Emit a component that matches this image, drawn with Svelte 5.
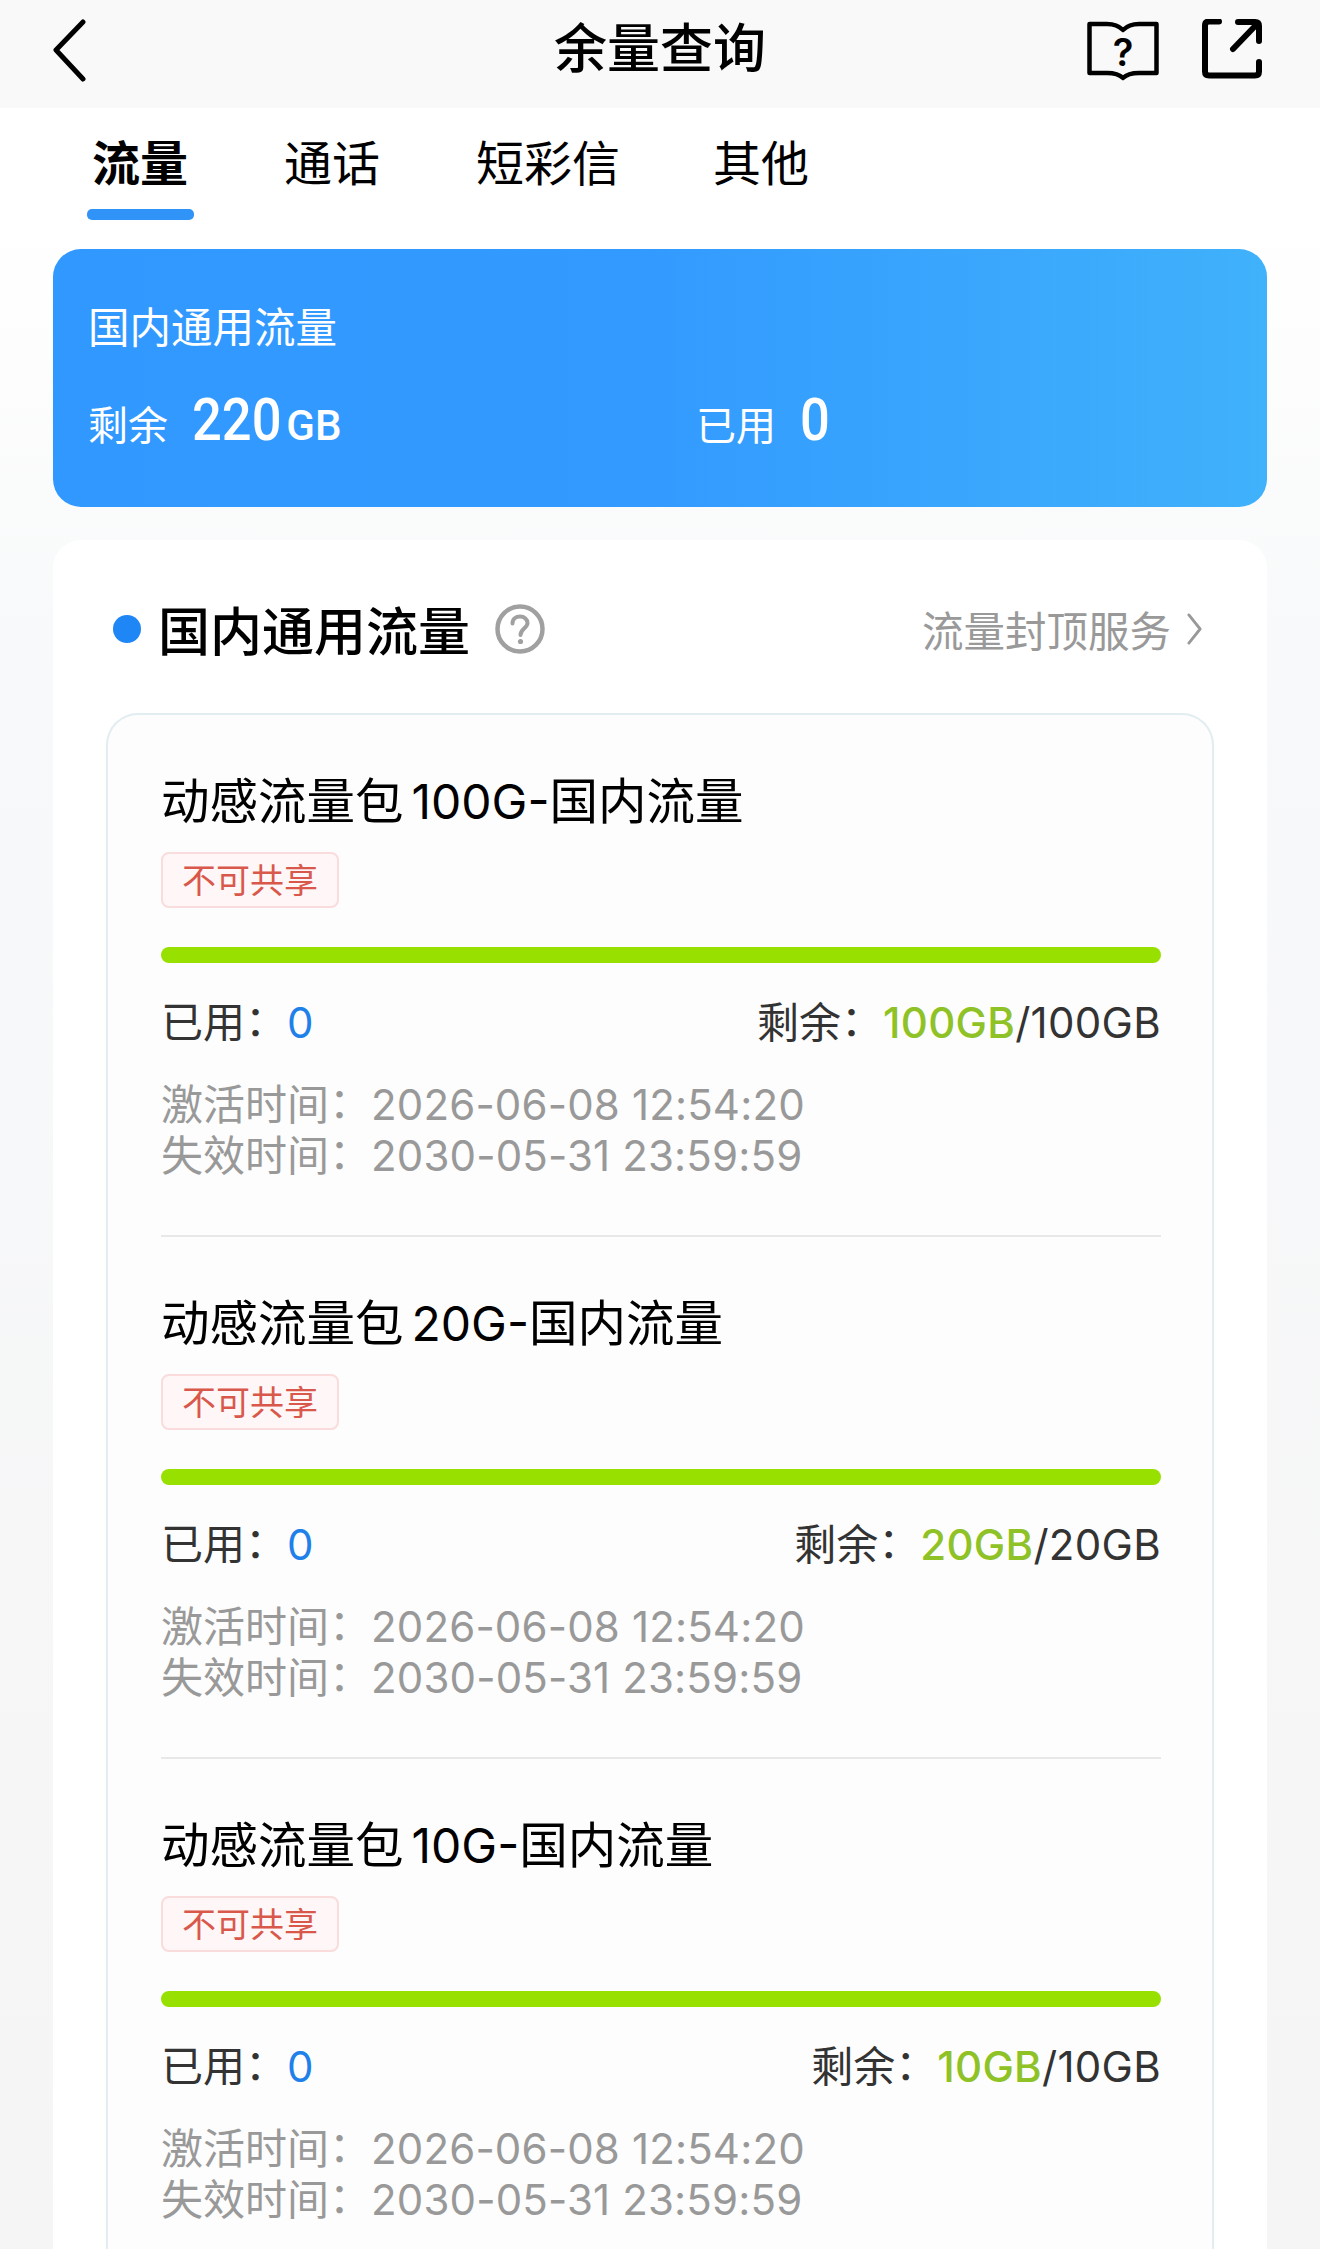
<script>
  const items = [
    { name: '动感流量包', size: '100G', left: '100GB', total: '100GB' },
    { name: '动感流量包', size: '20G', left: '20GB', total: '20GB' },
    { name: '动感流量包', size: '10G', left: '10GB', total: '10GB' }
  ];
</script>

<div class="page">
  <header class="nav">
    <svg class="back" width="40" height="64" viewBox="0 0 40 64" fill="none"><path d="M33 4 L6 32 L33 61" stroke="#000" stroke-width="5" stroke-linecap="round" stroke-linejoin="round"/></svg>
    <h1>余量查询</h1>
    <svg class="book" width="76" height="62" viewBox="0 0 76 62" fill="none"><path d="M4.5 5 H22 C29 5 34 7 38 11 C42 7 47 5 54 5 H71.5 V54 H54 C47 54 42 55 38 59 C34 55 29 54 22 54 H4.5 Z" stroke="#000" stroke-width="4.5" stroke-linejoin="round"/><text x="38" y="47" text-anchor="middle" class="q">?</text></svg>
    <svg class="share" width="64" height="62" viewBox="0 0 64 62" fill="none"><path d="M21 2.5 H11 Q7 2.5 7 6.5 V52.5 Q7 56.5 11 56.5 H57 Q61 56.5 61 52.5 V43" stroke="#000" stroke-width="6" stroke-linecap="round"/><path d="M40 3 H57 Q61 3 61 7 V22 M60 4 L35 30" stroke="#000" stroke-width="6" stroke-linecap="round"/></svg>
  </header>

  <nav class="tabs">
    <span class="tab active">流量</span>
    <span class="tab">通话</span>
    <span class="tab">短彩信</span>
    <span class="tab last">其他</span>
  </nav>

  <section class="hero">
    <div class="hero-title">国内通用流量</div>
    <div class="hero-row">
      <div class="hero-cell left"><span class="hl">剩余</span><b class="num">220</b><span class="unit">GB</span></div>
      <div class="hero-cell"><span class="hl">已用</span><b class="num">0</b></div>
    </div>
  </section>

  <section class="panel">
    <div class="panel-head">
      <i class="dot"></i>
      <h2>国内通用流量</h2>
      <svg class="help" width="50" height="50" viewBox="0 0 50 50" fill="none"><circle cx="25" cy="25" r="22.5" stroke="#a0a0a0" stroke-width="4.5"/><path d="M17.5 19.5 C17.5 15 21 12.5 25 12.5 C29.5 12.5 32.5 15.5 32.5 19 C32.5 24 25.5 24.5 25.5 31" stroke="#a0a0a0" stroke-width="4" stroke-linecap="round"/><circle cx="25.5" cy="37.5" r="2.6" fill="#a0a0a0"/></svg>
      <span class="more">流量封顶服务</span>
      <svg class="chev" width="16" height="34" viewBox="0 0 16 34" fill="none"><path d="M2 2 L14 17 L2 32" stroke="#999" stroke-width="3" stroke-linecap="round" stroke-linejoin="round"/></svg>
    </div>

    <div class="card">
      {#each items as it, i}
        <article class="item" class:first={i === 0}>
          <div class="title">{it.name}<span class="lat">{it.size}-</span>国内流量</div>
          <div class="tag">不可共享</div>
          <div class="bar"></div>
          <div class="usage">
            <div>已用<span class="colon">：</span><span class="used">0</span></div>
            <div>剩余<span class="colon">：</span><span class="left-val">{it.left}</span><span class="lat">/{it.total}</span></div>
          </div>
          <div class="dates">
            <div>激活时间<span class="colon">：</span><span class="lat">2026-06-08 12:54:20</span></div>
            <div>失效时间<span class="colon">：</span><span class="lat">2030-05-31 23:59:59</span></div>
          </div>
        </article>
      {/each}
    </div>
  </section>
</div>

<style>
  :global(body) { margin: 0; background: #f6f6f7; }
  .page {
    width: 1320px; height: 2249px; overflow: hidden;
    background: linear-gradient(180deg, #fff 220px, #f8f9fa 640px, #f5f5f6 100%);
    font-family: "Inter", "Noto Sans CJK SC", sans-serif;
    color: #000;
  }
  .nav {
    height: 108px; background: #f9f9f9; display: flex; align-items: center;
    position: relative; box-sizing: border-box; padding: 0 58px 9px 50px;
  }
  .back { flex: none; }
  .nav h1 {
    position: absolute; left: 0; right: 0; top: 14px; margin: 0; text-align: center;
    font-size: 53px; line-height: 62px; font-weight: 500;
    font-family: "Noto Sans CJK SC", sans-serif;
  }
  .q { font: 600 38px "Inter", sans-serif; fill: #000; }
  .book { margin-left: auto; flex: none; transform: translateX(3px); }
  .share { margin-left: 40px; flex: none; }

  .tabs {
    height: 141px; display: flex; gap: 96px; padding-left: 92px; box-sizing: border-box;
    font-size: 48px; font-family: "Noto Sans CJK SC", sans-serif;
  }
  .tab { line-height: 60px; margin-top: 22px; position: relative; height: 60px; }
  .tab.active { font-weight: 700; }
  .tab.last { margin-left: -3px; }
  .tab.active::after {
    content: ""; position: absolute; left: -5px; right: -6px; top: 79px; height: 11px;
    background: #2f93f8; border-radius: 5px;
  }

  .hero {
    margin: 0 53px; height: 258px; border-radius: 28px; box-sizing: border-box;
    background: linear-gradient(90deg, #3098ff 0%, #339bff 50%, #40b1fb 100%);
    color: #fff; padding: 52px 0 0 35px;
    font-family: "Noto Sans CJK SC", sans-serif;
  }
  .hero-title { font-size: 41.5px; line-height: 48px; }
  .hero-row { display: flex; margin-top: 35px; align-items: baseline; }
  .hero-cell { display: flex; align-items: baseline; }
  .hero-cell.left { width: 608px; }
  .hl { font-size: 40px; line-height: 72px; }
  .num {
    font-family: "Roboto", sans-serif; font-weight: 500; font-size: 60px; line-height: 72px;
    margin-left: 24px; display: inline-block; transform: scaleX(.875); transform-origin: left;
  }
  .hero-cell.left .num { margin-right: -13px; }
  .unit { font-family: "Roboto", sans-serif; font-weight: 500; font-size: 42px; margin-left: 5px; }

  .panel {
    margin: 33px 53px 0; background: #fff; border-radius: 28px 28px 0 0; padding: 0 53px;
  }
  .panel-head {
    height: 173px; box-sizing: border-box; padding-top: 5px; display: flex; align-items: center;
    font-family: "Noto Sans CJK SC", sans-serif;
  }
  .dot { width: 28px; height: 28px; border-radius: 50%; background: #1f86f5; margin-left: 7px; flex: none; }
  .panel-head h2 { margin: 0 0 0 17px; font-size: 52px; font-weight: 500; line-height: 62px; }
  .help { margin-left: 25px; flex: none; }
  .more { margin-left: auto; font-size: 41.5px; color: #999; }
  .chev { margin-left: 16px; margin-right: 12px; flex: none; width: 15px; }

  .card {
    border: 2px solid #e1edf0; border-bottom: none; border-radius: 32px 32px 0 0;
    background: #fdfdfd; padding: 0 51px 0 53px;
  }
  .item { height: 522px; box-sizing: border-box; padding-top: 52px; border-top: 2px solid #e8e8e8; }
  .item.first { border-top: 2px solid transparent; padding-top: 50px; height: 520px; }
  .title { font-size: 48.5px; height: 67px; line-height: 62px; font-family: "Noto Sans CJK SC", sans-serif; color: #000; white-space: nowrap; }
  .title .lat { font-family: "Inter", sans-serif; margin-left: 8px; font-size: 48px; }
  .tag {
    margin-top: 18px; width: 178px; height: 56px; box-sizing: border-box;
    border: 2px solid #f9dcdb; border-radius: 8px; background: #fff7f7; color: #d9584c;
    font-size: 34px; line-height: 50px; text-align: center;
    font-family: "Noto Sans CJK SC", sans-serif;
  }
  .bar { margin-top: 39px; height: 16px; border-radius: 8px; background: #98e000; }
  .usage {
    margin-top: 33px; display: flex; justify-content: space-between;
    line-height: 48px; color: #333; white-space: nowrap;
  }
  .usage > div, .dates > div { font-family: "Noto Sans CJK SC", sans-serif; font-size: 42px; }
  .usage .lat, .used, .left-val, .dates .lat { font-family: "Inter", sans-serif; font-size: 42px; }
  .usage .lat, .left-val { letter-spacing: .3px; }
  .dates .lat { letter-spacing: .15px; }
  .colon { position: relative; top: -2px; }
  .used { color: #1f80ea; }
  .left-val { color: #8fc226; font-weight: 500; }
  .dates { margin-top: 31px; color: #999; line-height: 48px; white-space: nowrap; }
</style>
